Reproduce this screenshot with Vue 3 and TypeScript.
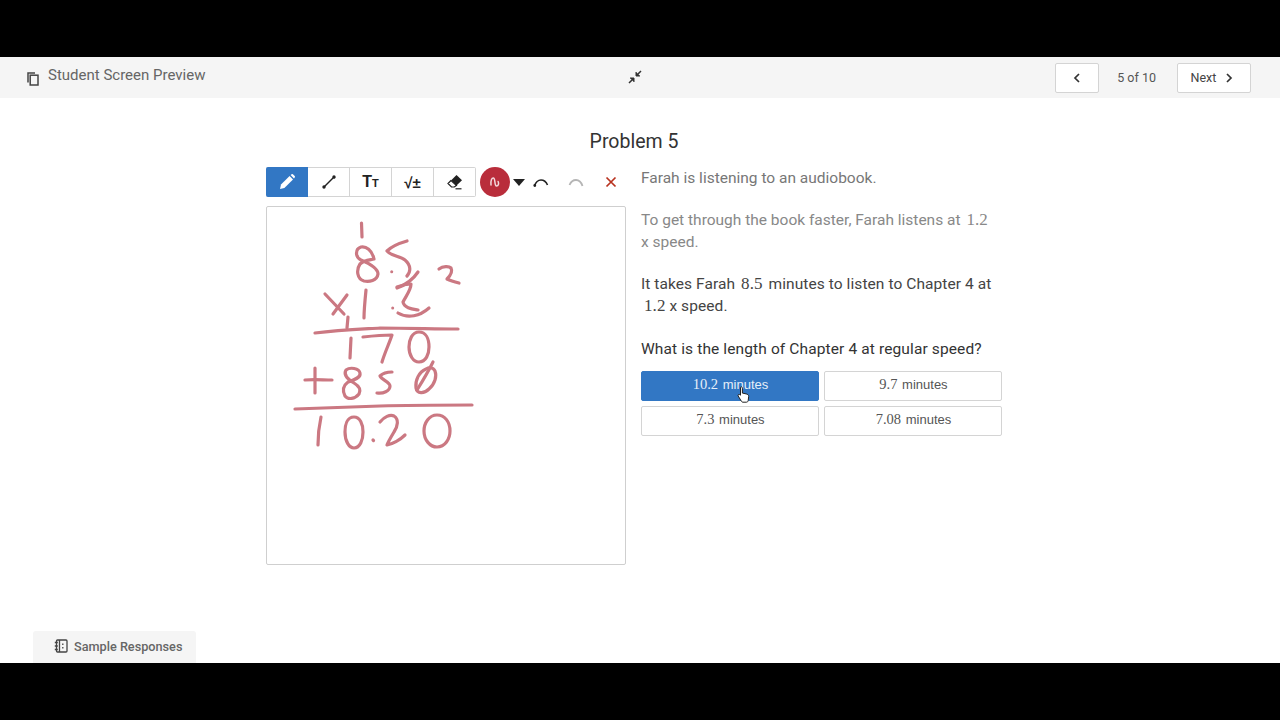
<script setup lang="ts">
interface Choice {
  label: string
  unit: string
  selected?: boolean
}

const choices: Choice[] = [
  { label: '10.2', unit: 'minutes', selected: true },
  { label: '9.7', unit: 'minutes' },
  { label: '7.3', unit: 'minutes' },
  { label: '7.08', unit: 'minutes' }
]

// handwriting, in page coordinates (see the svg viewBox)
const strokes: string[] = [
  'M361.5 223 L362 237',
  'M374 259 C372 250 366 246 361 247 C355 249 355 257 361 260 C368 263 378 268 378 274 C377 281 369 282 364 281 C357 279 356 270 360 264 C364 260 370 260 374 259',
  'M407 241 C400 243 392 246 387 251 C391 256 400 256 405 260 C411 265 411 272 407 276',
  'M418 272 C414 278 408 284 397 288',
  'M397 287 C402 285 407 284 411 284 C411 290 406 296 403 302 C404 308 412 309 418 310',
  'M398 313 C408 319 420 316 429 308',
  'M439 269 C443 266 449 266 451 268 C453 272 450 276 447 279 C451 281 455 282 459 283',
  'M325 294 L344 314',
  'M347 295 L333 314',
  'M366 290 C365 300 364 310 364 318',
  'M348 317 L347 328',
  'M315 333 C340 330 365 329 380 328 C410 328 435 329 458 329',
  'M351 338 L350 358',
  'M363 337 C372 336 382 335 392 335 C389 344 385 352 382 362',
  'M419 332 C412 332 409 340 409 347 C409 355 413 362 419 362 C426 362 429 354 429 347 C429 339 426 332 419 332',
  'M305 380 C314 379 323 380 332 380',
  'M315 368 L315 393',
  'M348 382 C354 380 361 378 360 373 C359 368 350 367 346 370 C343 375 349 380 354 383 C359 386 361 390 359 394 C355 399 348 400 345 396 C342 390 344 385 348 382',
  'M392 372 C387 372 382 374 380 376 C382 380 390 382 390 386 C390 391 383 394 377 393',
  'M426 369 C419 372 415 380 416 388 C417 394 424 394 429 389 C435 384 437 376 435 371 C433 367 429 367 426 369',
  'M433 362 C428 372 422 382 417 390',
  'M295 409 C320 408 350 407 380 406 C410 405 440 405 472 405',
  'M321 417 C319 426 318 436 318 445',
  'M354 417 C347 417 345 425 345 432 C345 441 349 448 354 448 C360 448 363 440 363 432 C363 424 360 417 354 417',
  'M373 440 L373.5 440.5',
  'M380 422 C384 417 390 414 394 416 C399 419 398 426 394 432 C391 437 388 442 387 445 C392 444 400 440 405 435',
  'M437 415 C429 415 424 423 424 431 C424 440 430 447 437 447 C445 447 450 439 450 431 C450 422 445 415 437 415'
]
</script>

<template>
  <div class="frame">
    <div class="screen">
      <header class="topbar">
        <div class="topbar-title">
          <svg class="copy-icon" width="12" height="14" viewBox="0 0 12 14" fill="none" stroke="#444" stroke-width="1.5">
            <path d="M1 10.5V1h7" />
            <rect x="3.2" y="3.2" width="7.8" height="9.8" />
          </svg>
          <span>Student Screen Preview</span>
        </div>
        <svg class="collapse-icon" width="14" height="14" viewBox="0 0 14 14" fill="none" stroke="#333" stroke-width="1.5">
          <path d="M1 13 5.5 8.5M13 1 8.5 5.5" />
          <path d="M2 8h4v4M12 6H8V2" fill="#333" stroke-width="1" />
        </svg>
        <nav class="pager">
          <button class="pager-btn prev" aria-label="Previous">
            <svg width="8" height="12" viewBox="0 0 8 12" fill="none" stroke="#333" stroke-width="1.700"><path d="M6 2 2 6l4 4" /></svg>
          </button>
          <span class="pager-count">5 of 10</span>
          <button class="pager-btn next">
            Next
            <svg width="8" height="12" viewBox="0 0 8 12" fill="none" stroke="#333" stroke-width="1.700"><path d="M2 2l4 4-4 4" /></svg>
          </button>
        </nav>
      </header>

      <main class="content">
        <h1 class="problem-title">Problem 5</h1>
        <div class="problem">
          <section class="sketch">
            <div class="toolbar">
              <div class="tool-group">
                <button class="tool active" aria-label="Pencil">
                  <svg width="16" height="16" viewBox="0 0 16 16" fill="#fff">
                    <path d="M1 15l1-4.4L10.6 2l3.4 3.4L5.400 14z" />
                    <path d="M11.600 1 12.600.3a1 1 0 0 1 1.300 0l1.800 1.800a1 1 0 0 1 0 1.300L15 4.400z" />
                  </svg>
                </button>
                <button class="tool" aria-label="Line">
                  <svg width="14" height="14" viewBox="0 0 14 14" fill="#222" stroke="#222" stroke-width="1.400">
                    <path d="M2 12 12 2" />
                    <circle cx="2" cy="12" r="1" />
                    <circle cx="12" cy="2" r="1" />
                  </svg>
                </button>
                <button class="tool tool-text" aria-label="Text">T<small>T</small></button>
                <button class="tool tool-math" aria-label="Math">√±</button>
                <button class="tool" aria-label="Eraser">
                  <svg width="16" height="16" viewBox="0 0 16 16">
                    <path d="M9.500 1 15 6.200 9.500 11.500 4 6.500z" fill="#222" />
                    <path d="M4 6.500 1 9.500 4.500 13h2.800l2.200-1.500z" fill="#fff" stroke="#222" stroke-width="1.200" />
                    <path d="M8.500 14.800h6" stroke="#222" stroke-width="1.200" />
                  </svg>
                </button>
              </div>
              <button class="color-dot" aria-label="Colour">
                <svg width="14" height="14" viewBox="0 0 14 14" fill="none" stroke="#f3d9dc" stroke-width="1.500" stroke-linecap="round">
                  <path d="M3 10C2.500 5.500 3.800 3 5.300 3 7.800 3 6 11 8.500 11c2 0 2.600-2.500 1.600-4.500" />
                </svg>
              </button>
              <span class="caret"></span>
              <button class="plain-tool undo" aria-label="Undo">
                <svg width="16" height="8" viewBox="0 0 16 8" fill="none" stroke="#222" stroke-width="1.600"><path d="M1.500 7C3 2.500 5.500 1 8 1c2.800 0 5 1.500 6.500 5" /><circle cx="1.800" cy="6.500" r=".6" /></svg>
              </button>
              <button class="plain-tool redo" aria-label="Redo">
                <svg width="16" height="8" viewBox="0 0 16 8" fill="none" stroke="#b5b5b5" stroke-width="1.800"><path d="M1.500 6C3 2.500 5.200 1 8 1c2.500 0 5 1.500 6.500 6" /></svg>
              </button>
              <button class="plain-tool clear" aria-label="Clear">
                <svg width="12" height="12" viewBox="0 0 12 12" fill="none" stroke="#b8321f" stroke-width="1.700"><path d="M1.500 1.500l9 9M10.500 1.500l-9 9" /></svg>
              </button>
            </div>
            <div class="canvas">
              <svg class="drawing" width="358" height="357" viewBox="267 207 358 357" fill="none">
                <path
                  v-for="(d, i) in strokes"
                  :key="i"
                  :d="d"
                  stroke="#cb7882"
                  stroke-width="3.200"
                  stroke-linecap="round"
                  stroke-linejoin="round"
                />
                <circle cx="391.700" cy="271.700" r="1.500" fill="#cb7882" />
                <circle cx="392.700" cy="308" r="1.500" fill="#cb7882" />
              </svg>
            </div>
          </section>

          <section class="question">
            <p class="fade-1">Farah is listening to an audiobook.</p>
            <p class="fade-2">To get through the book faster, Farah listens at <span class="num spaced">1.2</span> x speed.</p>
            <p class="fade-3">It takes Farah <span class="num spaced">8.5</span> minutes to listen to Chapter 4 at <span class="num lead">1.2</span> x speed.</p>
            <p class="fade-4 last">What is the length of Chapter 4 at regular speed?</p>
            <div class="choices">
              <button
                v-for="c in choices"
                :key="c.label"
                class="choice"
                :class="{ selected: c.selected }"
              >
                <span class="choice-num">{{ c.label }}</span> {{ c.unit }}
              </button>
              <svg class="pointer" width="13" height="17" viewBox="0 0 13 17">
                <path d="M3.500 1.300c.8-.8 1.900-.3 1.900.8v5l3.800.8c1.500.4 2.500 1.100 2.500 2.500l-.5 4.100c-.1 1-.8 1.700-1.800 1.700H6c-.7 0-1.200-.3-1.600-.9L1.200 10c-.6-1 .5-2.100 1.500-1.400l.8.600z" fill="#fff" stroke="#222" stroke-width="1" />
              </svg>
            </div>
          </section>
        </div>
      </main>

      <footer class="samples">
        <div class="samples-tab">
          <svg width="14" height="14" viewBox="0 0 14 14" fill="none" stroke="#444" stroke-width="1.300">
            <rect x="2.500" y="1" width="10.500" height="12" rx="1" />
            <path d="M5.500 1v12M.8 3.500h3M.8 7h3M.8 10.500h3M8.800 4.500v1.500M8.800 8v1.500" />
          </svg>
          <span>Sample Responses</span>
        </div>
      </footer>
    </div>
  </div>
</template>

<style>
html,
body {
  margin: 0;
  background: #000;
}
</style>

<style scoped>
.frame {
  height: 720px;
  padding: 57px 0;
  box-sizing: border-box;
  background: #000;
  font-family: Roboto, "Liberation Sans", sans-serif;
}

.screen {
  height: 100%;
  display: flex;
  flex-direction: column;
  background: #fff;
  color: #333;
}

button {
  font-family: inherit;
  cursor: pointer;
}

.topbar {
  flex: none;
  height: 41px;
  display: grid;
  grid-template-columns: 1fr auto 1fr;
  align-items: center;
  padding: 0 29px 0 27px;
  background: #f5f5f5;
}

.topbar-title {
  display: flex;
  align-items: center;
  gap: 9px;
  font-size: 15px;
  color: #666;
}

.topbar-title span {
  position: relative;
  top: -3px;
}

.copy-icon {
  position: relative;
  top: 1px;
}

.collapse-icon {
  margin-right: 9px;
  position: relative;
  top: -1px;
}

.pager {
  display: flex;
  align-items: center;
  justify-content: flex-end;
}

.pager-btn {
  height: 30px;
  box-sizing: border-box;
  display: flex;
  align-items: center;
  justify-content: center;
  background: #fff;
  border: 1px solid #d4d4d4;
  border-radius: 2px;
  color: #444;
  font-size: 12.500px;
}

.pager-btn.prev {
  width: 44px;
}

.pager-btn.next {
  width: 74px;
  gap: 9px;
  padding-right: 10px;
}

.pager-count {
  margin: 0 21px 0 18px;
  font-size: 12.500px;
  color: #555;
  padding-bottom: 1px;
}

.content {
  flex: 1;
  min-height: 0;
  display: flex;
  flex-direction: column;
  align-items: center;
  padding-right: 12px;
}

.problem-title {
  margin: 31px 0 12px;
  font-size: 19.500px;
  line-height: 26px;
  font-weight: 400;
  color: #333;
  text-align: center;
}

.problem {
  display: flex;
  gap: 15px;
  width: 736px;
}

.sketch {
  width: 360px;
  flex: none;
}

.toolbar {
  height: 30px;
  margin-bottom: 9px;
  display: flex;
  align-items: center;
}

.tool-group {
  display: flex;
  border: 1px solid #d4d4d4;
  border-left: 0;
  border-radius: 2px;
  box-sizing: border-box;
  height: 30px;
}

.tool {
  width: 42px;
  height: 28px;
  padding: 0;
  display: flex;
  align-items: center;
  justify-content: center;
  background: #fff;
  border: 0;
  border-right: 1px solid #d4d4d4;
  color: #222;
}

.tool:last-child {
  border-right: 0;
  width: 41px;
}

.tool.active {
  height: 30px;
  margin-top: -1px;
  background: #3277c4;
  border-right: 0;
  border-radius: 2px 0 0 2px;
}

.tool-text {
  font-family: "Liberation Sans", sans-serif;
  font-size: 16px;
  font-weight: 700;
}

.tool-text small {
  font-size: 11px;
  margin-top: 2px;
}

.tool-math {
  font-family: "Liberation Sans", sans-serif;
  font-size: 15px;
  font-weight: 700;
}

.color-dot {
  width: 30px;
  height: 30px;
  margin-left: 4px;
  padding: 0;
  display: flex;
  align-items: center;
  justify-content: center;
  background: #b92d3b;
  border: 0;
  border-radius: 50%;
}

.caret {
  width: 0;
  height: 0;
  margin-left: 3px;
  border-left: 6px solid transparent;
  border-right: 6px solid transparent;
  border-top: 7px solid #222;
}

.plain-tool {
  padding: 0;
  display: flex;
  align-items: center;
  background: none;
  border: 0;
}

.undo {
  margin-left: 8px;
  margin-top: 2px;
}

.redo {
  margin-left: 19px;
  margin-top: 2px;
}

.clear {
  margin-left: 21px;
}

.canvas {
  width: 360px;
  height: 359px;
  box-sizing: border-box;
  border: 1px solid #cfcfcf;
  border-radius: 2px;
  background: #fff;
}

.drawing {
  display: block;
}

.question {
  width: 361px;
  flex: none;
  font-size: 15.500px;
  line-height: 22px;
}

.question p {
  margin: 0 0 20px;
  max-width: 355px;
}

.question p.fade-3 {
  margin-bottom: 21px;
  letter-spacing: .08px;
}

.question p.last {
  margin: 0 0 11px;
  letter-spacing: .12px;
}

.fade-1 {
  color: #777;
}

.fade-2 {
  color: #888;
}

.fade-3 {
  color: #444;
}

.fade-4 {
  color: #333;
}

.num {
  font-family: "Liberation Serif", serif;
  font-size: 17px;
}

.spaced {
  margin: 0 2px;
}

.lead {
  margin-left: 3px;
}

.choices {
  position: relative;
  display: grid;
  grid-template-columns: 178px 178px;
  grid-auto-rows: 30px;
  gap: 5px;
}

.choice {
  padding: 0 0 3px 1px;
  background: #fff;
  border: 1px solid #d4d4d4;
  border-radius: 2px;
  color: #555;
  font-family: "Liberation Sans", sans-serif;
  font-size: 13px;
  word-spacing: 1px;
}

.choice-num {
  font-family: "Liberation Serif", serif;
  font-size: 14.500px;
}

.choice.selected {
  background: #3277c4;
  border-color: #3277c4;
  color: #e6eff9;
}

.pointer {
  position: absolute;
  left: 96px;
  top: 15px;
}

.samples {
  flex: none;
  height: 32px;
  padding-left: 33px;
}

.samples-tab {
  width: 163px;
  height: 32px;
  box-sizing: border-box;
  display: flex;
  align-items: center;
  gap: 6px;
  padding: 0 0 2px 21px;
  background: #f5f5f5;
  border-radius: 3px 3px 0 0;
  font-size: 12.700px;
  font-weight: 500;
  color: #666;
}
</style>
